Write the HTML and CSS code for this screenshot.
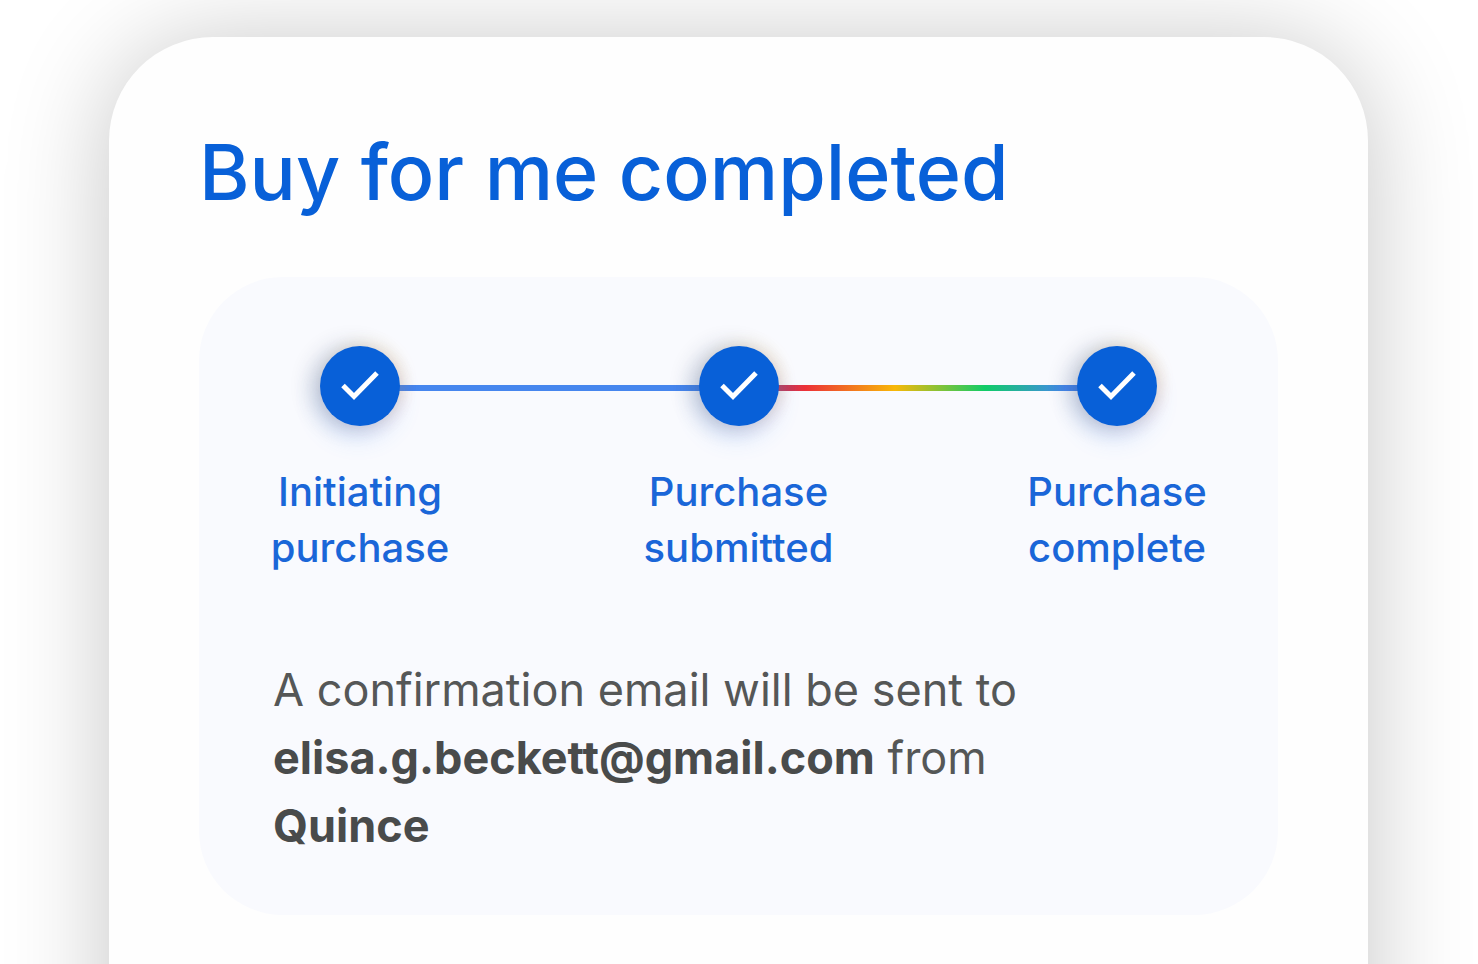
FILE: index.html
```html
<!DOCTYPE html>
<html lang="en">
<head>
<meta charset="utf-8">
<meta name="viewport" content="width=device-width, initial-scale=1">
<title>Buy for me</title>
<link rel="stylesheet" href="styles.css">
</head>
<body>
<main class="card">
  <h1 class="title">Buy for me completed</h1>
  <section class="panel">
    <ol class="steps">
      <li class="step">
        <span class="dot"><svg class="check" viewBox="0 0 40 40" aria-hidden="true"><path d="M3 19.500 14 30.500 37 7"/></svg></span>
        <span class="label">Initiating<br>purchase</span>
      </li>
      <li class="line" aria-hidden="true"></li>
      <li class="step">
        <span class="dot"><svg class="check" viewBox="0 0 40 40" aria-hidden="true"><path d="M3 19.500 14 30.500 37 7"/></svg></span>
        <span class="label">Purchase<br>submitted</span>
      </li>
      <li class="line rainbow" aria-hidden="true"></li>
      <li class="step">
        <span class="dot"><svg class="check" viewBox="0 0 40 40" aria-hidden="true"><path d="M3 19.500 14 30.500 37 7"/></svg></span>
        <span class="label">Purchase<br>complete</span>
      </li>
    </ol>
    <p class="message">A confirmation email will be sent to <strong>elisa.g.beckett@gmail.com</strong> from <strong>Quince</strong></p>
  </section>
</main>
</body>
</html>
```
FILE: styles.css
```css
* {
  box-sizing: border-box;
}

html {
  overflow: hidden;
}

body {
  display: flex;
  min-height: 100vh;
  margin: 0;
  padding: 37px 110px 0 109px;
  background: #fff;
  font-family: Inter, "Open Sans", sans-serif;
}

.card {
  flex: 1;
  margin-bottom: -120px;
  padding: 87px 90px 170px;
  border-radius: 104px 104px 0 0;
  background: #fefefe;
  box-shadow: 0 6px 104px rgba(0, 0, 0, 0.23);
}

.title {
  margin: 0 0 57px;
  color: #0860d8;
  font-size: 77px;
  font-weight: 500;
  line-height: 96px;
}

.panel {
  padding: 69px 74px 55px;
  border-radius: 84px;
  background: #f9fafe;
}

.steps {
  display: flex;
  margin: 0 -10px 80px;
  padding: 0;
  list-style: none;
}

.step {
  display: flex;
  flex: 0 0 194px;
  flex-direction: column;
  align-items: center;
  gap: 38px;
}

.dot {
  display: grid;
  place-items: center;
  z-index: 1;
  width: 80px;
  height: 80px;
  border-radius: 50%;
  background: #0860d8;
  box-shadow:
    -8px 0 22px rgba(40, 55, 80, 0.24),
    -2px 12px 24px rgba(66, 133, 244, 0.2),
    6px -6px 14px rgba(251, 188, 4, 0.08),
    6px 4px 14px rgba(234, 67, 53, 0.07);
}

.check {
  width: 40px;
  height: 40px;
  fill: none;
  stroke: #fff;
  stroke-width: 5;
}

.line {
  flex: 1;
  height: 6px;
  margin: 39px -58px 0;
  background: #4686ee;
}

.rainbow {
  background: linear-gradient(90deg, #b04070 0%, #ec3038 9%, #f8b808 39%, #10cc68 69%, #4686ee 96%);
}

.label {
  color: #1a66d8;
  font-size: 40px;
  font-weight: 500;
  line-height: 56px;
  text-align: center;
}

.message {
  max-width: 820px;
  margin: 0;
  color: #555757;
  font-size: 45px;
  line-height: 68px;
}

.message strong {
  color: #494b4b;
  font-weight: 700;
}
```
